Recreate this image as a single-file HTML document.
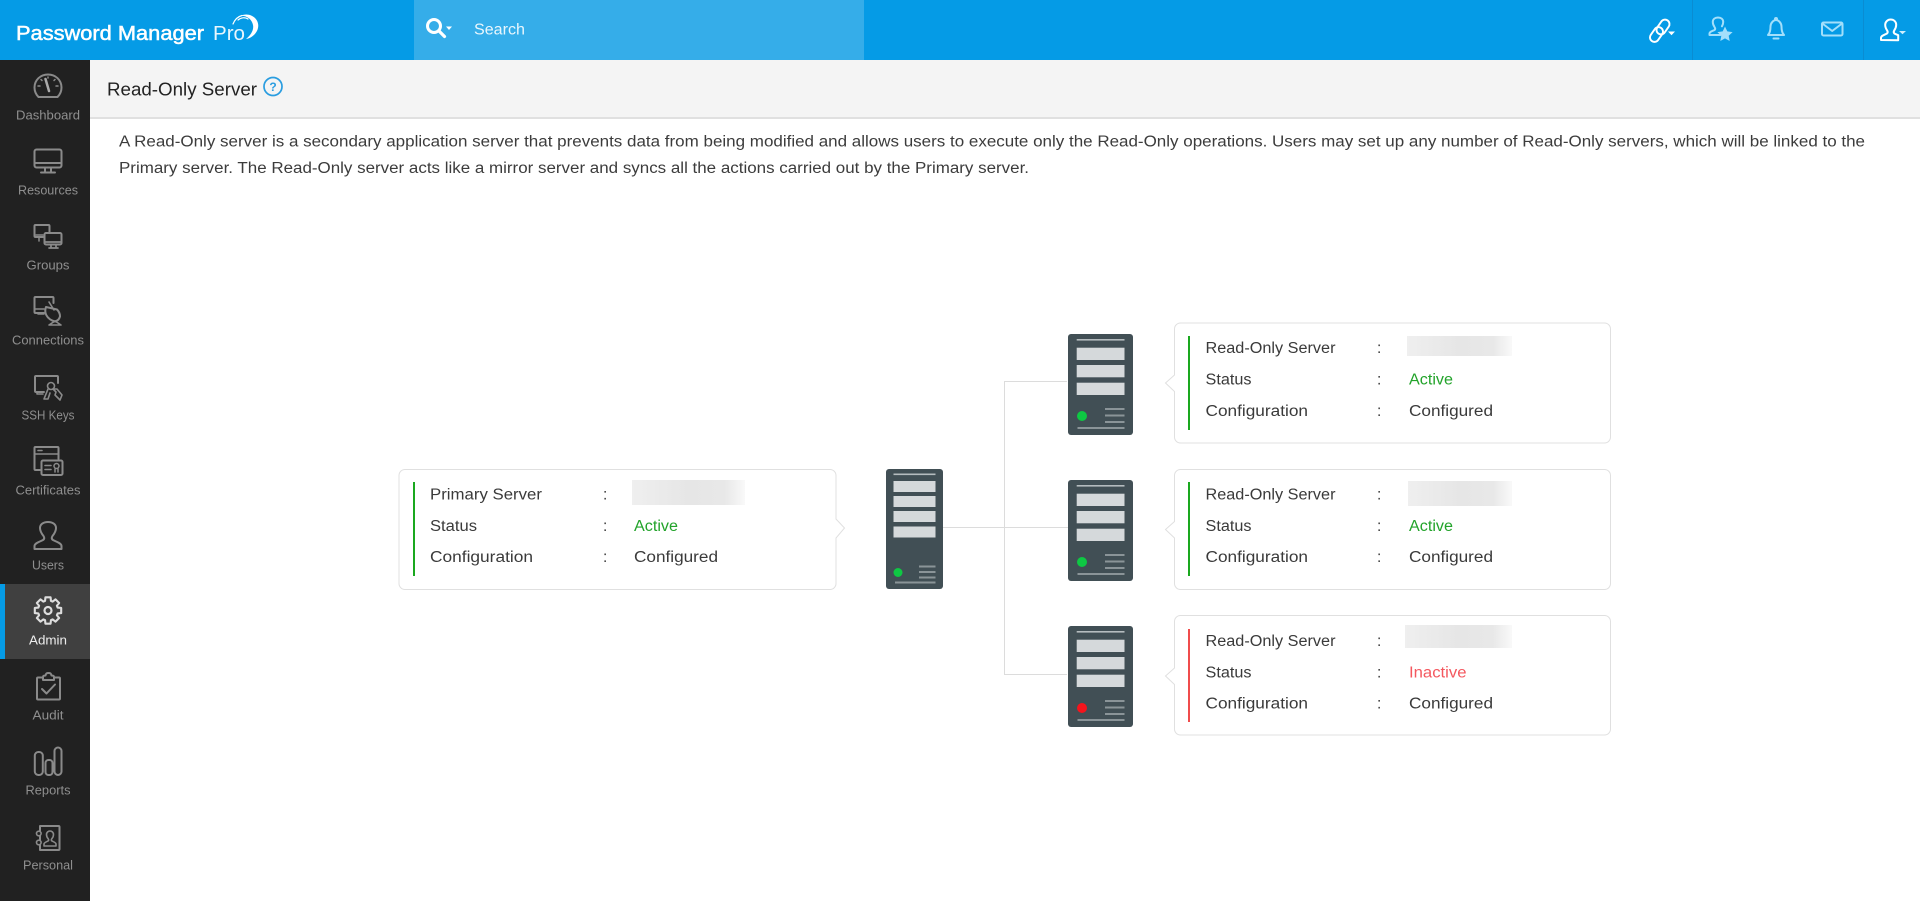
<!DOCTYPE html>
<html lang="en"><head><meta charset="utf-8"><title>Read-Only Server</title>
<style>
html,body{margin:0;padding:0;width:1920px;height:901px;overflow:hidden;background:#fff;font-family:"Liberation Sans",sans-serif}
.a{position:absolute}
#top{left:0;top:0;width:1920px;height:60px;background:#059be6}
#search{left:414px;top:0;width:450px;height:60px;background:#35ade9}
#d1{left:1692px;top:0;width:1px;height:60px;background:#0a8cd2}
#d2{left:1863px;top:0;width:1px;height:60px;background:#0a8cd2}
#side{left:0;top:60px;width:90px;height:841px;background:#212121}
#act{left:0;top:584px;width:90px;height:75px;background:#404040}
#actb{left:0;top:584px;width:5px;height:75px;background:#059be6}
#sub{left:90px;top:60px;width:1830px;height:57px;background:#f4f4f4;border-bottom:2px solid #e0e0e0}
svg{position:absolute;left:0;top:0}
text{font-family:"Liberation Sans",sans-serif}
.p{font-size:15.5px;fill:#3c3c3c}
.c{font-size:15.5px;fill:#3a3a3a}
.g{fill:#22a32a}
.r{fill:#f4585f}
.n{font-size:12.5px;fill:#8f8f8f;text-anchor:middle}
.i{fill:none;stroke:#8a8a8a;stroke-width:2;stroke-linejoin:round;stroke-linecap:round}
.hl{fill:none;stroke:#a3dffb;stroke-width:2;stroke-linejoin:round;stroke-linecap:round}
.card{fill:#fff;stroke:#e0e0e0;stroke-width:1}
</style></head><body>
<div class="a" id="top"></div><div class="a" id="search"></div><div class="a" id="d1"></div><div class="a" id="d2"></div>
<div class="a" id="side"></div><div class="a" id="act"></div><div class="a" id="actb"></div><div class="a" id="sub"></div>
<svg width="1920" height="901" viewBox="0 0 1920 901" xmlns="http://www.w3.org/2000/svg">
<defs>
<linearGradient id="bl" x1="0" x2="1" y1="0" y2="0"><stop offset="0" stop-color="#efefef"/><stop offset=".5" stop-color="#e6e6e6"/><stop offset=".82" stop-color="#e8e8e8"/><stop offset="1" stop-color="#f9f9f9"/></linearGradient>
<g id="srv">
<rect width="65" height="101" rx="3" fill="#414f55"/>
<rect x="8.7" y="5" width="47.8" height="1.6" fill="#b5bcbf"/>
<rect x="8.7" y="13.7" width="47.8" height="12.3" fill="#d5d9db"/>
<rect x="8.7" y="31" width="47.8" height="12.3" fill="#d5d9db"/>
<rect x="8.7" y="48.7" width="47.8" height="12.3" fill="#d5d9db"/>
<rect x="37" y="74" width="19.5" height="2" fill="#8a9498"/>
<rect x="37" y="80.5" width="19.5" height="2" fill="#8a9498"/>
<rect x="37" y="87" width="19.5" height="2" fill="#8a9498"/>
<rect x="9.5" y="93" width="47" height="2" fill="#8a9498"/>
</g>
</defs>

<!-- logo -->
<text x="16" y="40" font-size="20" fill="#fff" stroke="#fff" stroke-width=".5" textLength="188" lengthAdjust="spacingAndGlyphs">Password Manager</text>
<text x="213" y="40" font-size="20" fill="#e9f6fd" textLength="32" lengthAdjust="spacingAndGlyphs">Pro</text>
<path d="M240 16C250 11 260 19 258 28C257 33 252 38 246 39C251 35 254 30 253 25C252 19 246 15 240 16Z" fill="#fff"/>
<path d="M233 24C235 19 238 16.500 242 15.500M238 20C241 17.500 245 17 248 19" fill="none" stroke="#fff" stroke-width="1.200" stroke-linecap="round"/>

<!-- search -->
<circle cx="434" cy="26" r="6.500" fill="none" stroke="#fff" stroke-width="3"/>
<path d="M439 31L444.500 36.500" stroke="#fff" stroke-width="3.200" stroke-linecap="round"/>
<path d="M446 26.500h6l-3 3.500z" fill="#fff"/>
<text x="474" y="34.500" font-size="15.500" fill="#e8f6fd" textLength="51" lengthAdjust="spacingAndGlyphs">Search</text>

<!-- header right icons -->
<g fill="none" stroke="#fff" stroke-width="1.900">
<rect x="1658.500" y="19" width="9" height="16" rx="4.500" transform="rotate(35 1663 27)"/>
<rect x="1652" y="26.500" width="9" height="16" rx="4.500" transform="rotate(35 1656.500 34.500)"/>
</g>
<path d="M1668 31.500h7l-3.500 3.700z" fill="#fff"/>
<g class="hl">
<path d="M1709.500 35v-1.500c0-2 3.500-2.500 5-3.500c1-.7.800-1.800 0-3c-1.200-1.800-1.700-3.500-1.700-5c0-3 2.300-4.500 5.200-4.500c2.900 0 5.200 1.500 5.200 4.500c0 1.500-.5 3-1.300 4.300M1709.500 35h11"/>
<path d="M1768 35c2-2 2.500-5 2.500-8.500c0-3.500 3-6.500 5.500-6.500s5.500 3 5.500 6.500c0 3.500.5 6.500 2.500 8.500z"/>
<path d="M1773.500 38.500h5"/><circle cx="1776" cy="19" r="1"/>
<rect x="1822" y="22.500" width="20.500" height="13" rx="1.500"/>
<path d="M1823 24l9.200 7l9.200-7"/>
</g>
<path d="M1725 26.500l2.300 4.900l5.300.7l-3.900 3.600l1 5.300l-4.700-2.600l-4.700 2.600l1-5.300l-3.900-3.600l5.300-.7z" fill="#a3dffb"/>
<g fill="none" stroke="#fff" stroke-width="2" stroke-linejoin="round">
<path d="M1881 40v-2c0-2.500 4-3.300 6-4.500c1-.8.700-2 .2-3c-1.500-2-2-4-2-5.700c0-3.200 2.600-5.300 5.500-5.300c3 0 5.500 2.100 5.500 5.300c0 1.700-.6 3.700-2 5.700c-.5 1-.8 2.200.2 3c1 .6 2.500 1.100 3.800 1.700v5z"/>
</g>
<path d="M1899 31h7l-3.500 3.200z" fill="#cdeefd"/>

<!-- sidebar icons -->
<g class="i">
<path d="M38.500 97C35.500 94 34.500 91 34.500 87.500C34.500 80 40.500 74.500 48 74.500S61.500 80 61.500 87.500C61.500 91 60.500 94 57.500 97Z"/>
<path d="M38 86h2M56 86h2M41 79.500l1 1M55 79.500l-1 1M48 77v1" stroke-width="1.500"/>
<path d="M45.500 79L49 91" stroke-width="2.500" stroke="#aaa"/>

<rect x="34.500" y="149.500" width="27" height="18" rx="2"/>
<path d="M35 163h26M45 168v4M51 168v4M41 172.500h14"/>

<path d="M43 237h-7.500a1 1 0 0 1-1-1v-10a1 1 0 0 1 1-1h13a1 1 0 0 1 1 1v6"/>
<path d="M36 235h7M39 238v3" stroke-width="1.500"/>
<rect x="44.500" y="233" width="17" height="11.500" rx="1.500"/>
<path d="M45 242h16M51 245v2M56 245v2M49 248h9" stroke-width="1.700"/>

<path d="M44 313h-8.500a1 1 0 0 1-1-1v-14a1 1 0 0 1 1-1h17a1 1 0 0 1 1 1v5"/>
<path d="M35 309h9M38 314h6" stroke-width="1.500"/>
<path d="M46 307c-2 5 0 12 9 14.500c3-1 4-2 5-5c0-3-1-5-3-7z"/>
<path d="M49 302l5 8M55 321l6 4h-12z" stroke-width="1.600"/>

<path d="M44 392h-8a1 1 0 0 1-1-1v-14a1 1 0 0 1 1-1h21a1 1 0 0 1 1 1v6"/>
<path d="M37 392v2h6" stroke-width="1.500"/>
<circle cx="51" cy="386" r="3.500" stroke-width="1.600"/>
<path d="M48 389l-4 10h4l2-6M53 389l3 3l-1 3l5 5l2-5l-5-6z" stroke-width="1.600"/>

<path d="M40 470h-4.500a1 1 0 0 1-1-1v-21a1 1 0 0 1 1-1h22a1 1 0 0 1 1 1v11"/>
<path d="M35 454h23M38 450.500h4" stroke-width="1.600"/>
<rect x="41.500" y="460.500" width="21" height="14.500" rx="1.500"/>
<path d="M45 465.500h6M45 469.500h6" stroke-width="1.600"/>
<circle cx="56.500" cy="466" r="2.500" stroke-width="1.500"/><path d="M55 469v3M58 469v3" stroke-width="1.500"/>

<path d="M34.500 549v-3c0-3 6-4.500 8.500-6c1.500-1 1.500-2.500.5-4c-2-2.500-3.500-5.500-3.500-8c0-3.500 3-6 8-6s8 2.500 8 6c0 2.500-1.500 5.500-3.500 8c-1 1.500-1 3 .5 4c2.500 1.500 8.500 3 8.500 6v3z"/>

<g stroke="#dddddd" stroke-width="2.200"><polygon transform="translate(48 610.500) scale(.96)" points="10.04,-3.07 13.74,-2.67 13.74,2.67 10.04,3.07 9.27,4.93 11.61,7.83 7.83,11.61 4.93,9.27 3.07,10.04 2.67,13.74 -2.67,13.74 -3.07,10.04 -4.93,9.27 -7.83,11.61 -11.61,7.83 -9.27,4.93 -10.04,3.07 -13.74,2.67 -13.74,-2.67 -10.04,-3.07 -9.27,-4.93 -11.61,-7.83 -7.83,-11.61 -4.93,-9.27 -3.07,-10.04 -2.67,-13.74 2.67,-13.74 3.07,-10.04 4.93,-9.27 7.83,-11.61 11.61,-7.83 9.27,-4.93"/><circle cx="48" cy="610.500" r="3.500"/></g>

<path d="M43 677.500h-5a1 1 0 0 0-1 1v20a1 1 0 0 0 1 1h21a1 1 0 0 0 1-1v-20a1 1 0 0 0-1-1h-5"/>
<path d="M43 680v-3c0-1 1-1.500 2.500-1.500c.5-2 1-2.500 3-2.500s2.500.5 3 2.500c1.500 0 2.500.5 2.500 1.500v3z"/>
<path d="M42 689l4.500 4.500l8.500-9"/>

<rect x="34.800" y="752" width="8" height="23" rx="3.500"/>
<rect x="45.500" y="760" width="7" height="15" rx="3"/>
<rect x="54.500" y="747.500" width="7" height="27.500" rx="3.500"/>

<path d="M40 831v-5h18.500a1 1 0 0 1 1 1v22a1 1 0 0 1-1 1h-18.500v-5M40 836v4"/>
<circle cx="38.800" cy="833.500" r="2.300" stroke-width="1.600"/>
<circle cx="38.800" cy="842.500" r="2.300" stroke-width="1.600"/>
<path d="M44 846v-2c0-1.500 3-2.500 4-3c1-.7.800-1.500 0-2.500c-1-1.200-1.500-2.500-1.500-4c0-2 1.600-3.500 3.500-3.500s3.500 1.500 3.500 3.500c0 1.500-.5 2.800-1.500 4c-.8 1-1 1.800 0 2.500c1 .5 4 1.500 4 3v2z" stroke-width="1.600"/>
</g>

<!-- sidebar labels -->
<text class="n" x="48" y="119.500" textLength="64" lengthAdjust="spacingAndGlyphs">Dashboard</text>
<text class="n" x="48" y="194.500" textLength="60" lengthAdjust="spacingAndGlyphs">Resources</text>
<text class="n" x="48" y="269.500" textLength="43" lengthAdjust="spacingAndGlyphs">Groups</text>
<text class="n" x="48" y="344.500" textLength="72" lengthAdjust="spacingAndGlyphs">Connections</text>
<text class="n" x="48" y="419.500" textLength="53" lengthAdjust="spacingAndGlyphs">SSH Keys</text>
<text class="n" x="48" y="494.500" textLength="65" lengthAdjust="spacingAndGlyphs">Certificates</text>
<text class="n" x="48" y="569.500" textLength="32" lengthAdjust="spacingAndGlyphs">Users</text>
<text class="n" x="48" y="644.500" textLength="38" lengthAdjust="spacingAndGlyphs" style="fill:#ececec">Admin</text>
<text class="n" x="48" y="719.500" textLength="31" lengthAdjust="spacingAndGlyphs">Audit</text>
<text class="n" x="48" y="794.500" textLength="45" lengthAdjust="spacingAndGlyphs">Reports</text>
<text class="n" x="48" y="869.500" textLength="50" lengthAdjust="spacingAndGlyphs">Personal</text>

<!-- title -->
<text x="107" y="95.500" font-size="18" fill="#222" textLength="150" lengthAdjust="spacingAndGlyphs">Read-Only Server</text>
<circle cx="273" cy="86.500" r="9" fill="none" stroke="#2a9de0" stroke-width="1.700"/>
<text x="273" y="91" font-size="12" font-weight="bold" fill="#2a9de0" text-anchor="middle">?</text>

<!-- description -->
<text class="p" x="119" y="146.500" textLength="1746" lengthAdjust="spacingAndGlyphs">A Read-Only server is a secondary application server that prevents data from being modified and allows users to execute only the Read-Only operations. Users may set up any number of Read-Only servers, which will be linked to the</text>
<text class="p" x="119" y="173" textLength="910" lengthAdjust="spacingAndGlyphs">Primary server. The Read-Only server acts like a mirror server and syncs all the actions carried out by the Primary server.</text>

<!-- connectors -->
<path d="M943 527.500H1068M1067 381.500H1004.500V674.500H1067" fill="none" stroke="#dcdcdc" stroke-width="1"/>

<!-- primary card -->
<path class="card" d="M405 469.500H830a6 6 0 0 1 6 6V519L844.500 528L836 538V583.500a6 6 0 0 1-6 6H405a6 6 0 0 1-6-6V475.500a6 6 0 0 1 6-6Z"/>
<rect x="413" y="482" width="2" height="94" fill="#1aa81f"/>
<text class="c" x="430" y="499.500" textLength="112" lengthAdjust="spacingAndGlyphs">Primary Server</text>
<text class="c" x="603" y="499.500">:</text>
<rect x="632" y="480" width="113" height="25" fill="url(#bl)"/>
<text class="c" x="430" y="531" textLength="47" lengthAdjust="spacingAndGlyphs">Status</text>
<text class="c" x="603" y="531">:</text>
<text class="c g" x="634" y="531" textLength="44" lengthAdjust="spacingAndGlyphs">Active</text>
<text class="c" x="430" y="562" textLength="103" lengthAdjust="spacingAndGlyphs">Configuration</text>
<text class="c" x="603" y="562">:</text>
<text class="c" x="634" y="562" textLength="84" lengthAdjust="spacingAndGlyphs">Configured</text>

<!-- primary server -->
<rect x="886" y="469" width="57" height="120" rx="3" fill="#414f55"/>
<rect x="893.500" y="473.500" width="42" height="1.600" fill="#b5bcbf"/>
<rect x="893.500" y="481" width="42" height="11" fill="#d5d9db"/>
<rect x="893.500" y="496" width="42" height="11" fill="#d5d9db"/>
<rect x="893.500" y="511" width="42" height="11" fill="#d5d9db"/>
<rect x="893.500" y="526.500" width="42" height="11" fill="#d5d9db"/>
<circle cx="898" cy="572.500" r="4.500" fill="#0ec843"/>
<rect x="919" y="565.500" width="16.500" height="2" fill="#8a9498"/>
<rect x="919" y="571" width="16.500" height="2" fill="#8a9498"/>
<rect x="919" y="576.500" width="16.500" height="2" fill="#8a9498"/>
<rect x="895" y="581.500" width="40.500" height="2" fill="#8a9498"/>

<!-- servers -->
<use href="#srv" x="1068" y="334"/><circle cx="1082" cy="416" r="5" fill="#0ec843"/>
<use href="#srv" x="1068" y="480"/><circle cx="1082" cy="562" r="5" fill="#0ec843"/>
<use href="#srv" x="1068" y="626"/><circle cx="1082" cy="708" r="5" fill="#f5141c"/>

<!-- card 1 -->
<path class="card" d="M1180.500 323H1604.500a6 6 0 0 1 6 6V437a6 6 0 0 1-6 6H1180.500a6 6 0 0 1-6-6V391.500L1165.500 383L1174.500 375V329a6 6 0 0 1 6-6Z"/>
<rect x="1188" y="336" width="2" height="94" fill="#1aa81f"/>
<text class="c" x="1205.500" y="353" textLength="130" lengthAdjust="spacingAndGlyphs">Read-Only Server</text>
<text class="c" x="1377" y="353">:</text>
<rect x="1407" y="336" width="105" height="20" fill="url(#bl)"/>
<text class="c" x="1205.500" y="384.500" textLength="46" lengthAdjust="spacingAndGlyphs">Status</text>
<text class="c" x="1377" y="384.500">:</text>
<text class="c g" x="1409" y="384.500" textLength="44" lengthAdjust="spacingAndGlyphs">Active</text>
<text class="c" x="1205.500" y="416" textLength="102.500" lengthAdjust="spacingAndGlyphs">Configuration</text>
<text class="c" x="1377" y="416">:</text>
<text class="c" x="1409" y="416" textLength="84" lengthAdjust="spacingAndGlyphs">Configured</text>

<!-- card 2 -->
<path class="card" d="M1180.500 469.500H1604.500a6 6 0 0 1 6 6V583.500a6 6 0 0 1-6 6H1180.500a6 6 0 0 1-6-6V538L1165.500 529.500L1174.500 521.500V475.500a6 6 0 0 1 6-6Z"/>
<rect x="1188" y="482" width="2" height="94" fill="#1aa81f"/>
<text class="c" x="1205.500" y="499.500" textLength="130" lengthAdjust="spacingAndGlyphs">Read-Only Server</text>
<text class="c" x="1377" y="499.500">:</text>
<rect x="1408" y="481" width="104" height="25" fill="url(#bl)"/>
<text class="c" x="1205.500" y="531" textLength="46" lengthAdjust="spacingAndGlyphs">Status</text>
<text class="c" x="1377" y="531">:</text>
<text class="c g" x="1409" y="531" textLength="44" lengthAdjust="spacingAndGlyphs">Active</text>
<text class="c" x="1205.500" y="562" textLength="102.500" lengthAdjust="spacingAndGlyphs">Configuration</text>
<text class="c" x="1377" y="562">:</text>
<text class="c" x="1409" y="562" textLength="84" lengthAdjust="spacingAndGlyphs">Configured</text>

<!-- card 3 -->
<path class="card" d="M1180.500 615.500H1604.500a6 6 0 0 1 6 6V729a6 6 0 0 1-6 6H1180.500a6 6 0 0 1-6-6V684.500L1165.500 676L1174.500 668V621.500a6 6 0 0 1 6-6Z"/>
<rect x="1188" y="629" width="2" height="93" fill="#f04c4c"/>
<text class="c" x="1205.500" y="646" textLength="130" lengthAdjust="spacingAndGlyphs">Read-Only Server</text>
<text class="c" x="1377" y="646">:</text>
<rect x="1405" y="625" width="107" height="23" fill="url(#bl)"/>
<text class="c" x="1205.500" y="677.500" textLength="46" lengthAdjust="spacingAndGlyphs">Status</text>
<text class="c" x="1377" y="677.500">:</text>
<text class="c r" x="1409" y="677.500" textLength="57.500" lengthAdjust="spacingAndGlyphs">Inactive</text>
<text class="c" x="1205.500" y="708.500" textLength="102.500" lengthAdjust="spacingAndGlyphs">Configuration</text>
<text class="c" x="1377" y="708.500">:</text>
<text class="c" x="1409" y="708.500" textLength="84" lengthAdjust="spacingAndGlyphs">Configured</text>
</svg>
</body></html>
